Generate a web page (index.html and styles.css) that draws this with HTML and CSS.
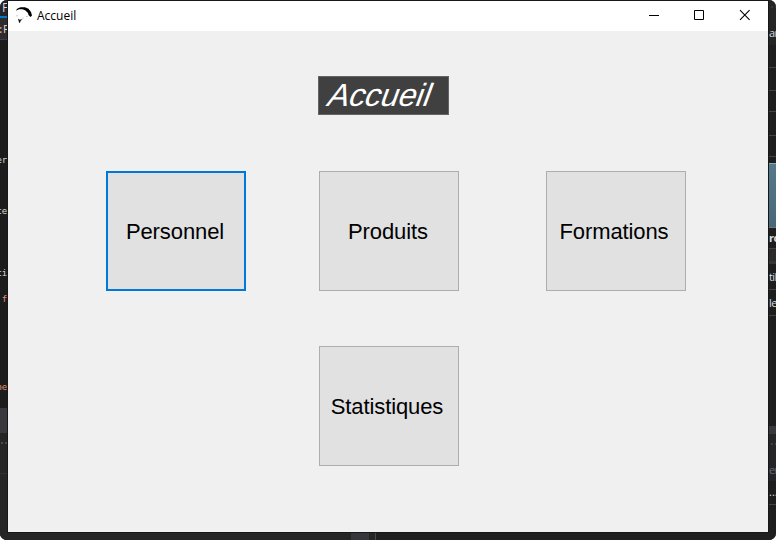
FILE: index.html
```html
<!DOCTYPE html>
<html lang="fr">
<head>
<meta charset="utf-8">
<title>Accueil</title>
<link rel="stylesheet" href="styles.css">
</head>
<body>
<div class="desktop">
  <div class="strip left">
    <div class="band tab">F</div>
    <div class="band crumb"><b>:</b>P</div>
    <div class="band code gap-a"></div>
    <div class="band code line-a">er</div>
    <div class="band code line-b">te</div>
    <div class="band code line-c">ti</div>
    <div class="band code line-d">f</div>
    <div class="band code line-e">ne</div>
    <div class="band pane-head"></div>
    <div class="band pane"></div>
    <div class="band pane-foot"></div>
  </div>
  <main class="window">
    <header class="titlebar">
      <svg class="logo" width="16" height="16" viewBox="0 0 16 16">
        <path d="M0 3.200L1.500 1.500L4.500 .3H9L12.500 1.700L15 5L16 8.500L14.500 10L12.500 8L12 6L9.500 3.500L6.500 2.200H3L.5 3.600Z" fill="#000"/>
        <path d="M2 11.500l1.600 1.200L6.500 12 4.500 14 4 16 3 15.500Z" fill="#111"/>
        <path d="M1 8v1.500M6.500 11h1M10 9.500h1.500" stroke="#bbb" fill="none"/>
      </svg>
      <span class="caption">Accueil</span>
      <div class="controls">
        <svg width="46" height="30" viewBox="0 0 46 30"><path d="M19 14.500h10" stroke="#000"/></svg>
        <svg width="46" height="30" viewBox="0 0 46 30"><path d="M18.500 9.500h9v9h-9z" stroke="#000" fill="none"/></svg>
        <svg width="46" height="30" viewBox="0 0 46 30"><path d="M18 9.200l9.600 9.600M27.600 9.200L18 18.800" stroke="#000" stroke-width="1.1"/></svg>
      </div>
    </header>
    <section class="content">
      <h1 class="heading"><span>Accueil</span></h1>
      <div class="menu">
        <button class="tile focused">Personnel</button>
        <button class="tile">Produits</button>
        <button class="tile wide">Formations</button>
        <button class="tile wide second-row">Statistiques</button>
      </div>
    </section>
  </main>
  <div class="strip right">
    <div class="band top-a"></div>
    <div class="band top-b">ar</div>
    <div class="band row r23"></div>
    <div class="band row r23"></div>
    <div class="band row r21"></div>
    <div class="band row r24"></div>
    <div class="band row r21"></div>
    <div class="band r6"></div>
    <div class="band preview"></div>
    <div class="band row props">ro</div>
    <div class="band tool"></div>
    <div class="band row til">til</div>
    <div class="band row le">le</div>
    <div class="band empty"></div>
    <div class="band pane-strip"></div>
    <div class="band dim">er</div>
    <div class="band row dots">...</div>
    <div class="band empty-end"></div>
  </div>
  <footer class="bottom">
    <i class="b1"></i><i class="b2"></i><i class="b3"></i><i class="b4"></i>
  </footer>
</div>
</body>
</html>
```
FILE: styles.css
```css
* { box-sizing: border-box; }
body { margin: 0; background: #fff; font-family: "Open Sans", "Noto Sans", sans-serif; }
.desktop {
  display: grid;
  grid-template: 533px 7px / 7px 762px 7px;
  width: 776px;
  height: 540px;
  overflow: hidden;
  border-radius: 7px;
  background: #1e1e1e;
}

/* Editor edges visible behind the window */
.strip { display: flex; flex-direction: column; overflow: hidden; height: 533px; }
.band {
  flex: none;
  display: flex;
  align-items: center;
  overflow: hidden;
  white-space: nowrap;
  color: #dcdcdc;
  font-size: 12px;
  line-height: 14px;
}
.left .tab { height: 18px; padding-left: 2px; border-bottom: 2px solid #007acc; background: #25252b; }
.left .crumb { height: 22px; background: #2d2d30; border-bottom: 1px solid #3f3f46; font-size: 11px; }
.crumb b { flex: none; width: 4px; margin-left: -1px; color: #d7a65b; }
.left .code {
  align-items: flex-start;
  justify-content: flex-end;
  background: #1c1c1c;
  font: 9px/12px "DejaVu Sans Mono", monospace;
  letter-spacing: -.2px;
}
.left .gap-a { height: 114px; }
.left .line-a { height: 51px; }
.left .line-b { height: 62px; }
.left .line-c { height: 26px; }
.left .line-d { height: 88px; color: #e58a7a; }
.left .line-e { height: 27px; color: #e0966f; }
.left .pane-head { height: 25px; background: #38383d; }
.left .pane {
  height: 41px;
  border-bottom: 1px solid #303033;
  background:
    radial-gradient(circle, #4c4c50 .7px, transparent .8px) 0 8px / 4px 4px repeat-x,
    #252526;
}
.left .pane-foot { height: 59px; background: #252526; }

.right .band { font-size: 11px; letter-spacing: -.6px; }
.right .top-a { height: 24px; background: radial-gradient(circle, #38383c .7px, transparent .8px) 1px 5px / 4px 4px repeat-x, #252526; }
.right .top-b { height: 21px; padding-bottom: 3px; background: #252526; }
.right .row { border-bottom: 1px solid #434346; }
.right .r21 { height: 21px; }
.right .r23 { height: 23px; }
.right .r24 { height: 24px; }
.right .r6 { height: 6px; }
.right .preview { height: 65px; border-top: 1px solid #8ba7b3; border-bottom: 1px solid #777; background: linear-gradient(#55798a, #486879); }
.right .props { height: 21px; font-weight: 700; }
.right .tool { height: 15px; background: #2b2b2c; border-bottom: 3px solid #35353a; }
.right .til { height: 26px; }
.right .le { height: 26px; }
.right .empty { height: 110px; }
.right .pane-strip { height: 8px; background: #38383d; }
.right .dim {
  height: 47px;
  padding-top: 24px;
  color: #6a6a6e;
  background: radial-gradient(circle, #444448 .7px, transparent .8px) 1px 8px / 4px 4px repeat-x, #252529;
}
.right .dots { height: 24px; padding-bottom: 2px; letter-spacing: 0; }
.right .empty-end { height: 28px; }
.bottom { grid-column: 1 / -1; display: flex; background: #1f1f1f; }
.b1 { width: 351px; background: #252526; }
.b2 { width: 18px; background: #36363b; }
.b3 { width: 6px; background: #252526; }
.b4 { width: 1px; background: #48484c; }

/* Application window */
.window { height: 533px; border: 1px solid #17171a; background: #f0f0f0; }
.titlebar { display: flex; height: 30px; background: #fff; }
.logo { margin: 6px 5px 0 8px; }
.caption { color: #000; font-size: 12px; line-height: 30px; }
.controls { display: flex; margin-left: auto; }
.controls svg { display: block; }
.content { padding: 45px 0 0 98px; }
.heading {
  width: 131px;
  height: 39px;
  margin: 0 0 56px 212px;
  padding-left: 11px;
  border: 1px solid #646464;
  background: #404040;
  color: #fff;
  font: 400 32px/37px "Liberation Sans", Arial, sans-serif;
}
.heading span { display: inline-block; transform: translateX(-1px) skewX(-20deg); letter-spacing: -.1px; }
.menu { display: grid; grid-template-columns: 213px 227px 140px; row-gap: 55px; }
.tile {
  width: 140px;
  height: 120px;
  padding: 1px 2px 0 0;
  border: 1px solid #adadad;
  background: #e1e1e1;
  color: #000;
  font: 22px/24px "Liberation Sans", Arial, sans-serif;
  letter-spacing: -.1px;
}
.tile.wide { padding-right: 4px; }
.tile.focused { border: 2px solid #0078d7; }
.second-row { grid-column: 2; }
```
